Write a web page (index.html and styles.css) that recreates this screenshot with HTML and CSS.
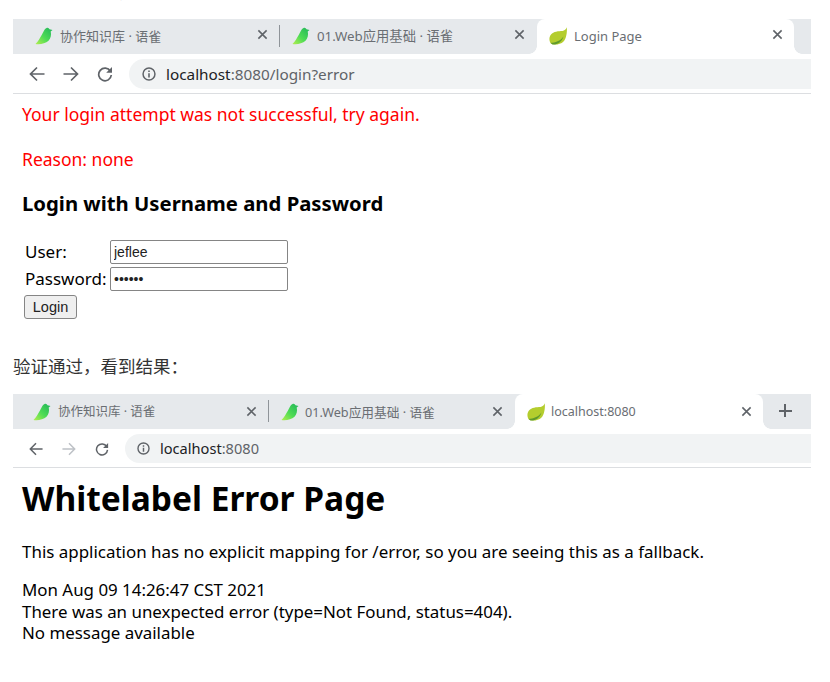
FILE: index.html
```html
<!DOCTYPE html>
<html lang="zh">
<head>
<meta charset="utf-8">
<title>Login Page</title>
<link rel="stylesheet" href="styles.css">
</head>
<body>
<svg class="defs" width="0" height="0" aria-hidden="true">
  <defs>
    <linearGradient id="birdG" x1="0" y1="1" x2="1" y2="0">
      <stop offset="0" stop-color="#b4ee50"/>
      <stop offset=".45" stop-color="#4fdc55"/>
      <stop offset="1" stop-color="#1fb45a"/>
    </linearGradient>
    <symbol id="bird" viewBox="0 0 18 18">
      <path d="M.5 17C3 14.500 5 11 7 7.500C8.500 5 9.500 1.500 12 .8C13.300 .5 14 1.500 14.500 2.300L17.500 3L15.700 4.600C16.500 8 15.800 11.500 13.500 13.800C10.500 16.500 5 17.800 .5 17Z" fill="url(#birdG)"/>
    </symbol>
    <symbol id="leaf" viewBox="0 0 18 18">
      <path d="M17.800 .2C17 2.500 15.500 3.500 13.500 4C9.500 4 4.500 4.500 2 7.500C-.2 10 0 14.500 2 16.800C5 18.200 11.500 17.800 14.500 14.500C17 12 18.300 6 17.800 .2Z" fill="#b4cd2e"/>
      <path d="M1.800 15.800C6 15.800 11.500 14 14.500 9.500C13 15 8 18 3.500 17.500C2.800 17.200 2.200 16.500 1.800 15.800Z" fill="#5f9a2c"/>
    </symbol>
    <symbol id="close" viewBox="0 0 12 12">
      <path d="M1.500 1.500L10.500 10.500M10.500 1.500L1.500 10.500" fill="none" stroke="currentColor" stroke-width="1.700"/>
    </symbol>
    <symbol id="back" viewBox="0 0 16 16">
      <path d="M15.500 8H1.800M8 1.500L1.500 8L8 14.500" fill="none" stroke="currentColor" stroke-width="1.700"/>
    </symbol>
    <symbol id="fwd" viewBox="0 0 16 16">
      <path d="M.5 8H14.200M8 1.500L14.500 8L8 14.500" fill="none" stroke="currentColor" stroke-width="1.700"/>
    </symbol>
    <symbol id="reload" viewBox="0 0 16 16">
      <path d="M13.400 5.200A6.300 6.300 0 1 0 14.300 9" fill="none" stroke="currentColor" stroke-width="1.700"/>
      <path d="M15 1V6.800H9.200Z" fill="currentColor"/>
    </symbol>
    <symbol id="info" viewBox="0 0 16 16">
      <circle cx="8" cy="8" r="6.800" fill="none" stroke="currentColor" stroke-width="1.700"/>
      <path d="M7.100 7H8.900V12H7.100ZM7.100 4H8.900V5.700H7.100Z" fill="currentColor"/>
    </symbol>
  </defs>
</svg>

<main class="page">
  <p class="clipped">输入正确用户，密码登录</p>

  <section class="browser browser-login">
    <div class="tabstrip">
      <div class="tab tab-first">
        <svg class="favicon"><use href="#bird"/></svg>
        <span class="tab-title">协作知识库 · 语雀</span>
        <svg class="tab-close"><use href="#close"/></svg>
      </div>
      <span class="tab-sep"></span>
      <div class="tab tab-second">
        <svg class="favicon"><use href="#bird"/></svg>
        <span class="tab-title">01.Web应用基础 · 语雀</span>
        <svg class="tab-close"><use href="#close"/></svg>
      </div>
      <div class="tab tab-active">
        <svg class="favicon"><use href="#leaf"/></svg>
        <span class="tab-title">Login Page</span>
        <svg class="tab-close"><use href="#close"/></svg>
      </div>
      <div class="tab-rest"></div>
    </div>
    <div class="toolbar">
      <svg class="nav"><use href="#back"/></svg>
      <svg class="nav"><use href="#fwd"/></svg>
      <svg class="nav"><use href="#reload"/></svg>
      <div class="omnibox">
        <svg class="info"><use href="#info"/></svg>
        <span class="url"><b>localhost</b>:8080/login?error</span>
      </div>
    </div>
  </section>

  <section class="content">
    <p class="error first">Your login attempt was not successful, try again.</p>
    <p class="error second">Reason: none</p>
    <h3 class="login-title">Login with Username and Password</h3>
    <form class="login-form">
      <div class="form-row">
        <label class="form-label" for="user">User:</label>
        <input class="form-input" id="user" type="text" value="jeflee">
      </div>
      <div class="form-row">
        <label class="form-label" for="pass">Password:</label>
        <input class="form-input" id="pass" type="password" value="jeflee">
      </div>
      <button class="form-button" type="button">Login</button>
    </form>
  </section>

  <p class="caption">验证通过，看到结果：</p>

  <section class="browser browser-result">
    <div class="tabstrip">
      <div class="tab tab-first">
        <svg class="favicon"><use href="#bird"/></svg>
        <span class="tab-title">协作知识库 · 语雀</span>
        <svg class="tab-close"><use href="#close"/></svg>
      </div>
      <span class="tab-sep"></span>
      <div class="tab tab-second">
        <svg class="favicon"><use href="#bird"/></svg>
        <span class="tab-title">01.Web应用基础 · 语雀</span>
        <svg class="tab-close"><use href="#close"/></svg>
      </div>
      <div class="tab tab-active">
        <svg class="favicon"><use href="#leaf"/></svg>
        <span class="tab-title">localhost:8080</span>
        <svg class="tab-close"><use href="#close"/></svg>
      </div>
      <div class="tab-rest"><span class="plus"></span></div>
    </div>
    <div class="toolbar">
      <svg class="nav"><use href="#back"/></svg>
      <svg class="nav nav-off"><use href="#fwd"/></svg>
      <svg class="nav"><use href="#reload"/></svg>
      <div class="omnibox">
        <svg class="info"><use href="#info"/></svg>
        <span class="url"><b>localhost</b>:8080</span>
      </div>
    </div>
  </section>

  <section class="content">
    <h1 class="wl-title">Whitelabel Error Page</h1>
    <p class="wl-text">This application has no explicit mapping for /error, so you are seeing this as a fallback.</p>
    <div class="wl-detail">
      <div>Mon Aug 09 14:26:47 CST 2021</div>
      <div>There was an unexpected error (type=Not Found, status=404).</div>
      <div>No message available</div>
    </div>
  </section>
</main>
</body>
</html>
```
FILE: styles.css
```css
* { box-sizing: border-box; }

html, body { margin: 0; padding: 0; background: #fff; }

body {
  font-family: "Noto Sans", "Noto Sans CJK SC", sans-serif;
  color: #000;
  overflow: hidden;
  height: 682px;
}

.defs { display: block; height: 0; }

.page {
  width: 811px;
  padding-left: 13px;
}

.clipped {
  margin: -21px 0 0;
  height: 40px;
  font: 17.500px/24px "Noto Sans CJK SC", sans-serif;
  color: #333;
}

.browser-result { margin-top: 16px; }

.tabstrip {
  display: flex;
  align-items: stretch;
  height: 35px;
  background: #e6e9ec;
}

.tab {
  position: relative;
  display: flex;
  align-items: center;
  font: 13px/18px "Noto Sans", "Noto Sans CJK SC", sans-serif;
}

.browser-login .tab-first { width: 266px; padding-left: 22px; }
.browser-login .tab-second { width: 257px; padding-left: 12px; }
.browser-login .tab-active { width: 257px; padding-left: 12px; }

.browser-result .tab-first { width: 255px; padding-left: 20px; }
.browser-result .tab-second { width: 246px; padding-left: 12px; }
.browser-result .tab-active { width: 248px; padding-left: 12px; }

.tab-active {
  background: #fff;
  border-radius: 8px 8px 0 0;
}

.tab-active::before,
.tab-active::after {
  content: "";
  position: absolute;
  bottom: 0;
  width: 8px;
  height: 8px;
}

.tab-active::before {
  left: -8px;
  background: radial-gradient(circle at 0 0, transparent 7.500px, #fff 8px);
}

.tab-active::after {
  right: -8px;
  background: radial-gradient(circle at 100% 0, transparent 7.500px, #fff 8px);
}

.favicon {
  flex: none;
  width: 18px;
  height: 18px;
  margin-top: -2px;
}

.browser-result .favicon { margin-top: 0; }

.tab-title {
  margin-left: 7px;
  margin-top: -2px;
  white-space: nowrap;
  color: #6a6e73;
}

.tab-second .tab-title { font-size: 13.300px; }

.browser-result .tab-title { font-size: 12.500px; margin-left: 7px; margin-top: 1px; }

.browser-result .tab-second .tab-title { font-size: 12.700px; margin-left: 6px; }

.browser-result .tab-active .tab-title { margin-left: 6px; }

.tab-close {
  flex: none;
  width: 11px;
  height: 11px;
  margin-left: auto;
  margin-right: 11px;
  margin-top: -4px;
  color: #5f6368;
}

.browser-result .tab-close { margin-top: -1px; }

.tab-second .tab-close { margin-right: 12px; }

.tab-sep {
  flex: none;
  width: 1px;
  height: 22px;
  margin-top: 6px;
  background: #8f9499;
}

.tab-rest {
  flex: 1;
  display: flex;
  align-items: center;
  justify-content: center;
}

.plus {
  display: block;
  width: 13px;
  height: 13px;
  margin-right: 4px;
  margin-top: -2px;
  background:
    linear-gradient(#5f6368, #5f6368) center / 13px 2px no-repeat,
    linear-gradient(#5f6368, #5f6368) center / 2px 13px no-repeat;
}

.toolbar {
  display: flex;
  align-items: center;
  height: 40px;
  padding: 5px 0 4px 16px;
  background: #fff;
  border-bottom: 1px solid #dcdee1;
}

.browser-result .toolbar { height: 39px; }

.nav {
  flex: none;
  width: 16px;
  height: 16px;
  margin-right: 18px;
  color: #5f6368;
}

.nav:nth-child(3) { margin-right: 16px; }

.browser-result .nav {
  width: 14px;
  height: 14px;
  margin-right: 19px;
}

.browser-result .nav:nth-child(3) { margin-right: 16px; }

.browser-result .nav-off { color: #bdc1c6; }

.omnibox {
  flex: 1;
  display: flex;
  align-items: center;
  height: 30px;
  padding-left: 13px;
  border-radius: 15px 0 0 15px;
  background: #f1f3f4;
}

.browser-result .omnibox { height: 29px; padding-left: 12px; }

.info {
  flex: none;
  width: 14px;
  height: 14px;
  color: #5f6368;
}

.browser-result .info { width: 13px; height: 13px; }

.url {
  margin-left: 10px;
  font: 15.300px/20px "Noto Sans", sans-serif;
  color: #5f6368;
  white-space: nowrap;
}

.browser-result .url { margin-left: 10px; margin-top: -2px; font-size: 14.600px; }

.url b { font-weight: 400; color: #202124; }

.content { padding-left: 9px; }

.error {
  margin: 0;
  font-size: 17.500px;
  line-height: 24px;
  color: #f00;
}

.first { margin-top: 8px; }
.second { margin-top: 21px; }

.login-title {
  margin: 19px 0 0;
  font-size: 20.300px;
  line-height: 26px;
  font-weight: 700;
  color: #000;
}

.login-form {
  display: flex;
  flex-direction: column;
  align-items: flex-start;
  margin-top: 24px;
}

.form-row {
  display: flex;
  align-items: center;
  height: 24px;
  margin-bottom: 3px;
}

.form-label {
  width: 88px;
  padding-left: 3px;
  font-size: 17px;
  line-height: 24px;
}

.form-input {
  width: 178px;
  height: 24px;
  padding: 0 3px;
  border: 1px solid #858585;
  border-radius: 2px;
  background: #fff;
  font: 14px "Liberation Sans", sans-serif;
  color: #222;
}

.form-button {
  width: 53px;
  height: 24px;
  margin-top: 1px;
  margin-left: 2px;
  padding: 0;
  border: 1px solid #858585;
  border-radius: 3px;
  background: #efefef;
  font: 14.500px "Liberation Sans", sans-serif;
  color: #222;
}

.caption {
  margin: 35px 0 0;
  font: 17.500px/24px "Noto Sans CJK SC", sans-serif;
  color: #333;
}

.wl-title {
  margin: 8px 0 0;
  font-size: 33.500px;
  line-height: 44px;
  font-weight: 700;
  color: #000;
}

.wl-text {
  margin: 21px 0 0;
  font-size: 16.950px;
  line-height: 22px;
}

.wl-detail {
  margin-top: 16px;
  font-size: 16.900px;
  line-height: 21.500px;
}
```
